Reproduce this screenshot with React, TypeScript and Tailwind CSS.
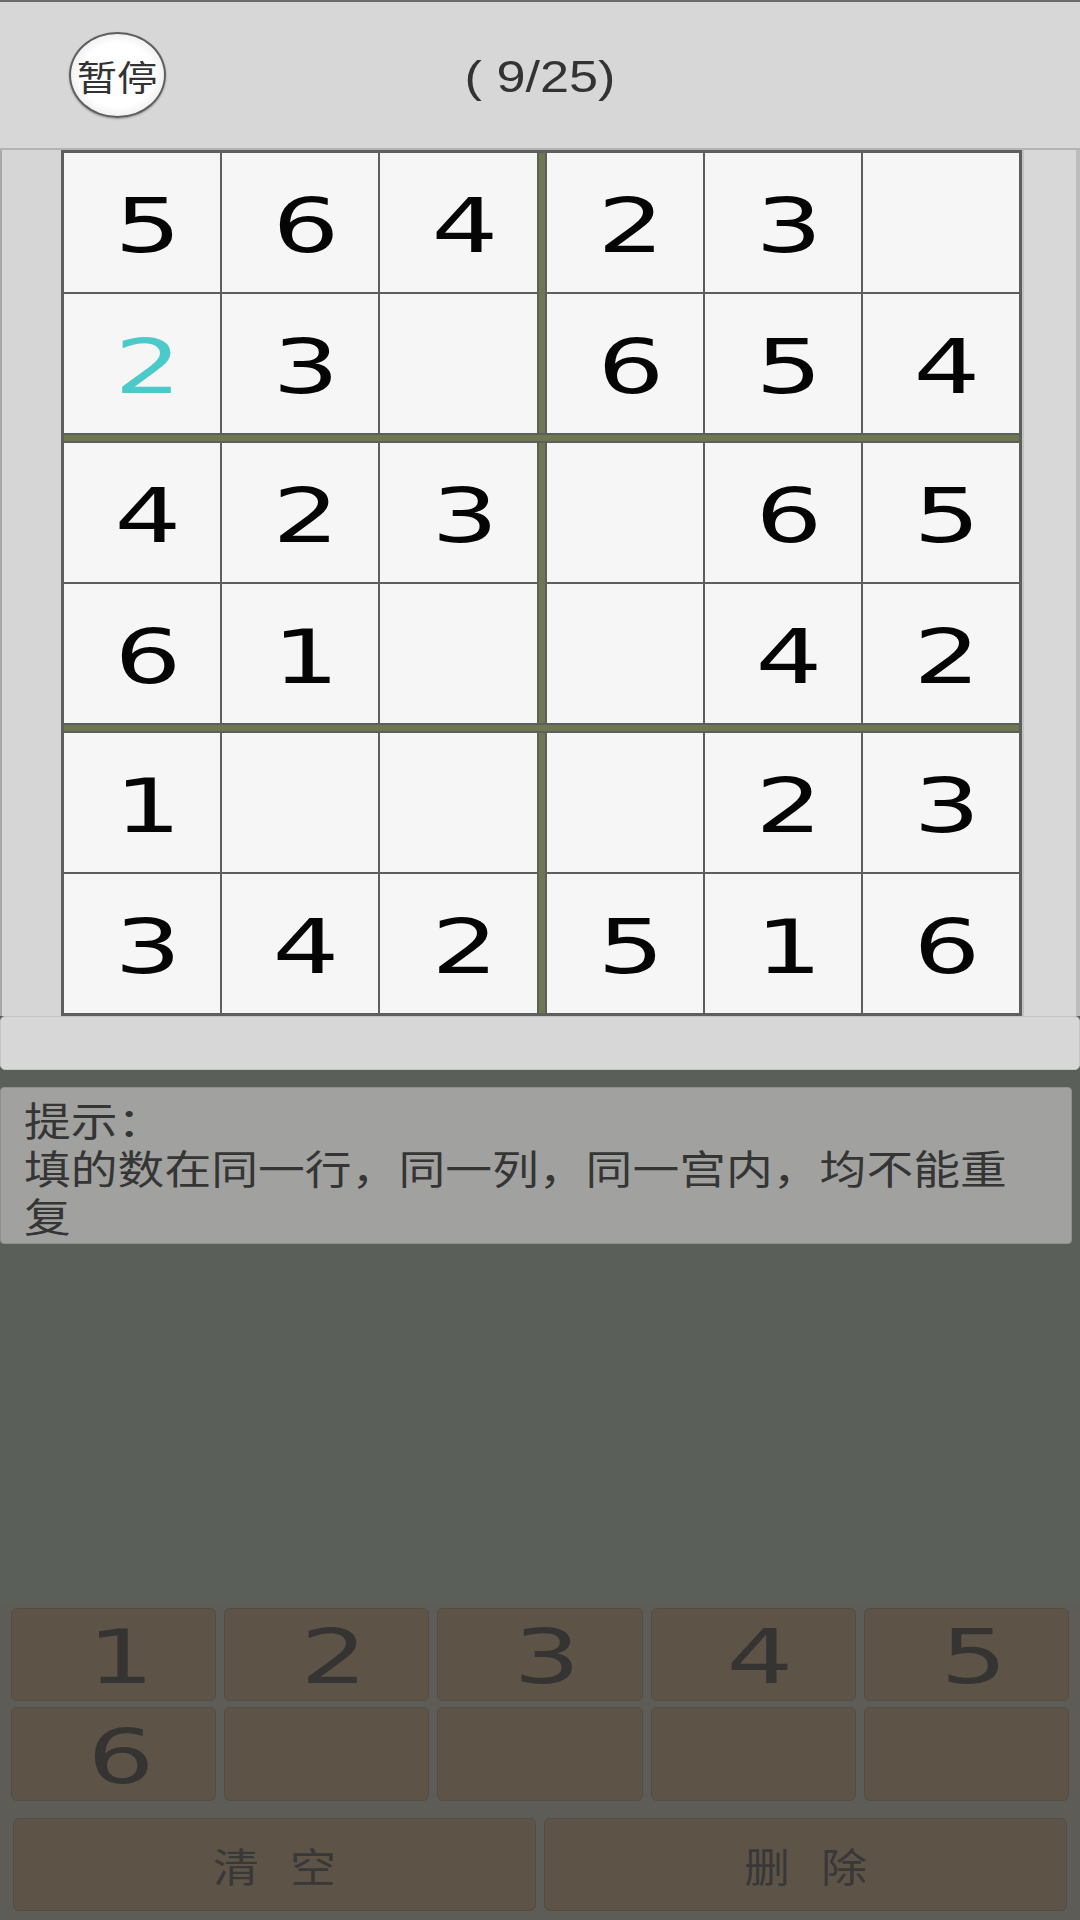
import React from "react";

const grid: (number | null)[][] = [
  [5, 6, 4, 2, 3, null],
  [2, 3, null, 6, 5, 4],
  [4, 2, 3, null, 6, 5],
  [6, 1, null, null, 4, 2],
  [1, null, null, null, 2, 3],
  [3, 4, 2, 5, 1, 6],
];

function Cell({ v, cyan }: { v: number | null; cyan?: boolean }) {
  return (
    <div className="h-[139px] bg-[#f6f6f6] flex items-center justify-center">
      {v !== null && (
        <span
          className={
            "inline-block translate-x-[6px] translate-y-[4px] scale-x-[1.4] font-['DejaVu_Sans',sans-serif] text-[75px] leading-none " +
            (cyan ? "text-[#4ccaca]" : "text-[#050505]")
          }
        >
          {v}
        </span>
      )}
    </div>
  );
}

function Box({ r, c }: { r: number; c: number }) {
  const cells = [];
  for (let i = 0; i < 2; i++) {
    for (let j = 0; j < 3; j++) {
      const rr = r * 2 + i;
      const cc = c * 3 + j;
      cells.push(<Cell key={`${i}-${j}`} v={grid[rr][cc]} cyan={rr === 1 && cc === 0} />);
    }
  }
  return <div className="flex-1 grid grid-cols-3 gap-[2px] bg-[#5c5f5b]">{cells}</div>;
}

function HSep() {
  return <div className="h-[10px] bg-[#6f7652] border-y-2 border-[#5c5f5b]" />;
}

function BoxRow({ r }: { r: number }) {
  return (
    <div className="flex">
      <Box r={r} c={0} />
      <div className="w-[10px] bg-[#6f7652] border-x-2 border-[#5c5f5b]" />
      <Box r={r} c={1} />
    </div>
  );
}

function KeyBtn({ n }: { n?: number }) {
  return (
    <div className="flex-1 h-full rounded-[6px] bg-[#5d5447] border border-[#524d45] flex items-center justify-center">
      {n !== undefined && (
        <span className="inline-block translate-x-[7px] translate-y-[3px] scale-x-[1.4] font-['DejaVu_Sans',sans-serif] text-[75px] leading-none text-[#353433]">
          {n}
        </span>
      )}
    </div>
  );
}

export default function App() {
  return (
    <div className="w-[1080px] h-[1920px] overflow-hidden flex flex-col bg-[#5a5f5a]">
      {/* Header */}
      <div className="h-[150px] shrink-0 bg-[#d7d7d7] border-t-2 border-t-[#6b6b6b] border-b-2 border-b-[#b4b4b4] grid grid-cols-[1fr_auto_1fr] items-center">
        <div className="pl-[69px]">
          <div className="w-[97px] h-[86px] rounded-[50%] border-2 border-[#5e5e5e] bg-[radial-gradient(ellipse_at_center,_#ffffff_55%,_#d9d9d9_100%)] shadow-[0_1px_2px_rgba(0,0,0,0.3)] flex items-center justify-center">
            <span className="inline-block scale-x-[1.15] font-['Noto_Sans_CJK_SC',sans-serif] text-[35px] leading-none text-[#333333]">
              暂停
            </span>
          </div>
        </div>
        <div className="pt-[3px]">
          <span className="inline-block scale-x-[1.16] font-['Liberation_Sans',sans-serif] text-[45px] leading-none text-[#333333]">
            ( 9/25)
          </span>
        </div>
        <div />
      </div>

      {/* Board */}
      <div className="flex h-[866px] shrink-0 bg-[#d6d6d6]">
        <div className="w-[61px] border-l-2 border-[#a9a9a9] bg-[#d6d6d6]" />
        <div className="w-[961px] border-[3px] border-[#5c5f5b] bg-[#5c5f5b] flex flex-col">
          <BoxRow r={0} />
          <HSep />
          <BoxRow r={1} />
          <HSep />
          <BoxRow r={2} />
        </div>
        <div className="flex-1 border-l-2 border-[#c2c2c2] border-r-[4px] border-r-[#bdbdbd] bg-[#d8d8d8]" />
      </div>

      {/* Light bar */}
      <div className="h-[54px] shrink-0 bg-[#d7d7d7] rounded-[5px] border border-[#c4c4c4]" />

      {/* Hint area */}
      <div className="h-[533px] shrink-0 bg-[#5a5f5a] pt-[17px]">
        <div className="w-[1072px] h-[157px] bg-[#a1a29f] rounded-[4px] border border-[#8f908d] pl-[23px] pt-[7px] font-['Noto_Sans_CJK_SC',sans-serif] text-[40px] leading-[48px] text-[#353535]">
          <div className="h-[48px]">
            <span className="inline-block origin-left scale-x-[1.17] whitespace-nowrap">提示：</span>
          </div>
          <div className="h-[48px]">
            <span className="inline-block origin-left scale-x-[1.17] whitespace-nowrap">
              填的数在同一行，同一列，同一宫内，均不能重
            </span>
          </div>
          <div className="h-[48px]">
            <span className="inline-block origin-left scale-x-[1.17] whitespace-nowrap">复</span>
          </div>
        </div>
      </div>

      {/* Keypad */}
      <div className="flex-1 bg-[#5e5c57] pt-[5px] flex flex-col">
        <div className="h-[93px] px-[11px] flex gap-[8px]">
          <KeyBtn n={1} />
          <KeyBtn n={2} />
          <KeyBtn n={3} />
          <KeyBtn n={4} />
          <KeyBtn n={5} />
        </div>
        <div className="h-[94px] mt-[6px] px-[11px] flex gap-[8px]">
          <KeyBtn n={6} />
          <KeyBtn />
          <KeyBtn />
          <KeyBtn />
          <KeyBtn />
        </div>
        <div className="h-[93px] mt-[17px] px-[13px] flex gap-[8px]">
          <div className="flex-1 rounded-[6px] bg-[#5d5447] border border-[#524d45] flex items-center justify-center">
            <span className="inline-block scale-x-[1.15] font-['Noto_Sans_CJK_SC',sans-serif] text-[40px] leading-none text-[#383838] [word-spacing:18px]">
              清 空
            </span>
          </div>
          <div className="flex-1 rounded-[6px] bg-[#5d5447] border border-[#524d45] flex items-center justify-center">
            <span className="inline-block scale-x-[1.15] font-['Noto_Sans_CJK_SC',sans-serif] text-[40px] leading-none text-[#383838] [word-spacing:18px]">
              删 除
            </span>
          </div>
        </div>
      </div>
    </div>
  );
}
